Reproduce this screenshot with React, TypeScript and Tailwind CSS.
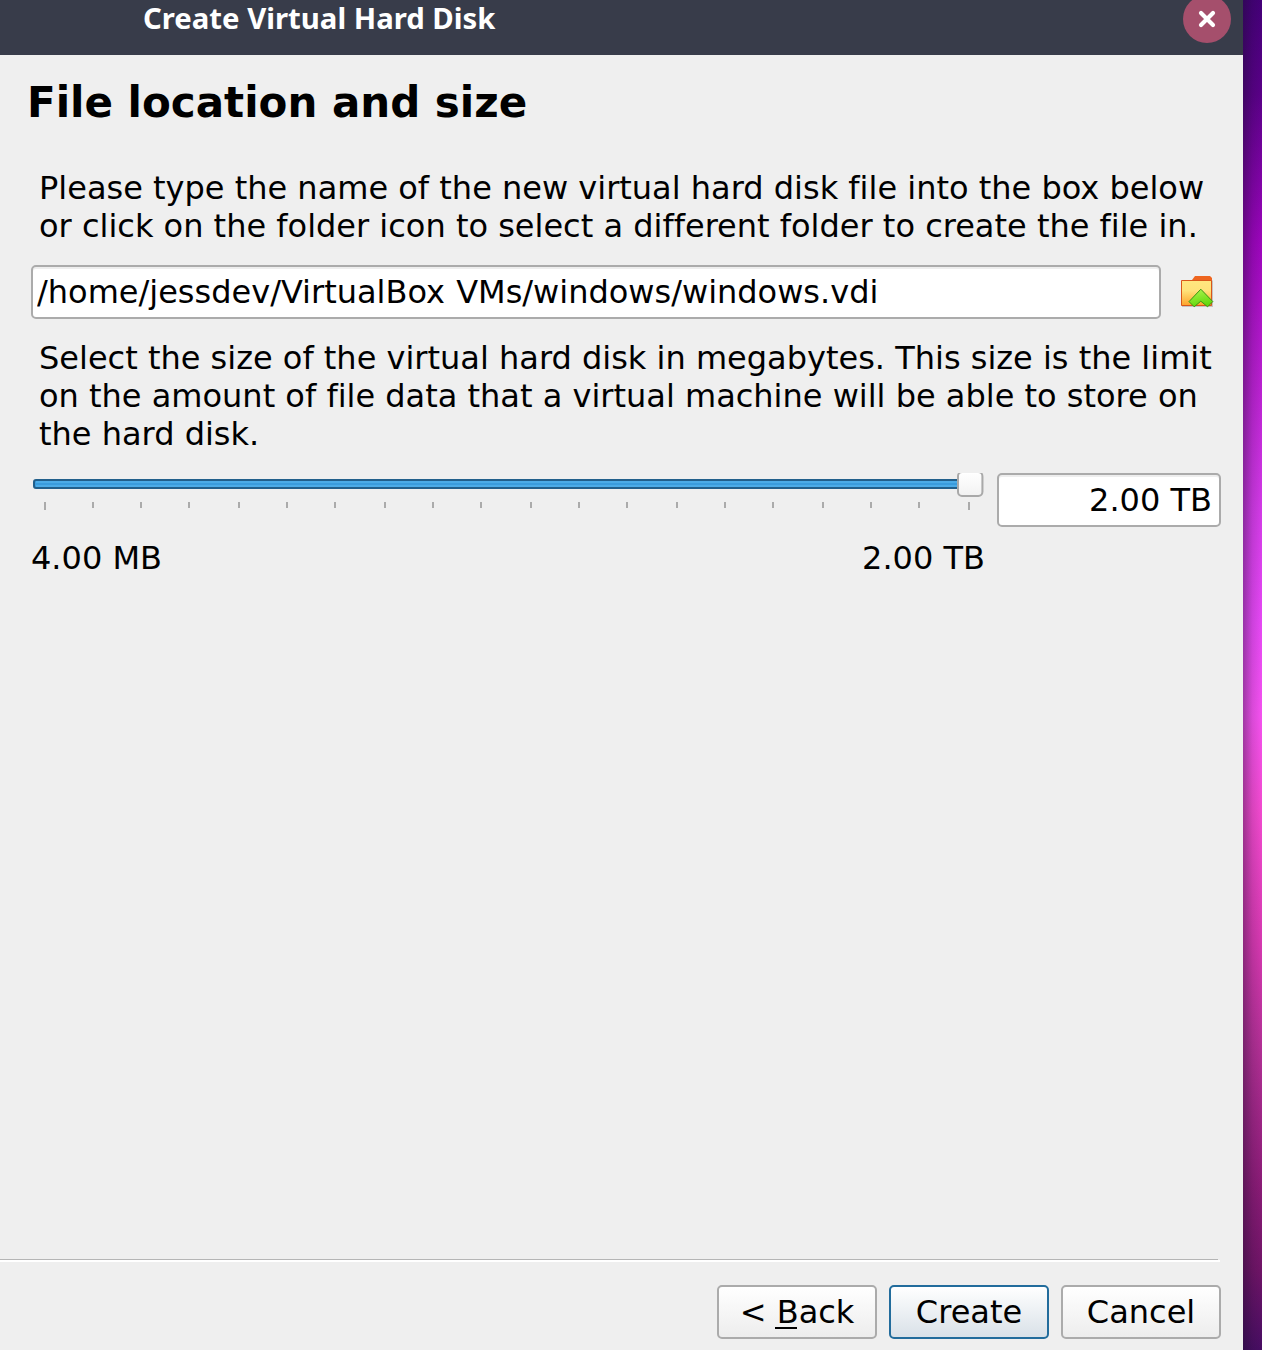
const ticks = [44, 92, 140, 188, 238, 286, 334, 384, 432, 480, 530, 578, 626, 676, 724, 772, 822, 870, 918, 968];

function FolderIcon() {
  return (
    <svg width="36" height="34" viewBox="0 0 36 34" className="block">
      <defs>
        <linearGradient id="folder" x1="0" y1="0" x2="0" y2="1">
          <stop offset="0" stopColor="#ffe680" />
          <stop offset="0.4" stopColor="#ffe27a" />
          <stop offset="1" stopColor="#fda32b" />
        </linearGradient>
        <linearGradient id="arrow" x1="0" y1="0" x2="0.3" y2="1">
          <stop offset="0" stopColor="#b0f552" />
          <stop offset="1" stopColor="#62d80c" />
        </linearGradient>
      </defs>
      <path d="M3 6.5H34V33H3Z" fill="#c4c4c4" />
      <path d="M13 6L16 2H31L33 4V8H12Z" fill="#ee651f" />
      <path d="M2.5 6.5H32.5V31.5H2.5Z" fill="url(#folder)" stroke="#d9571a" />
      <path d="M21.8 15.2L33.8 27.6L28.6 32.8L21.8 27.2L15.2 32.8L10 27.6Z" fill="url(#arrow)" stroke="#399514" strokeWidth="1" />
    </svg>
  );
}

const field =
  "h-[54px] rounded-[5px] border-2 border-[#ababab] bg-white shadow-[inset_0_2px_0_#eeeeee] leading-[50px] outline-none";
const button = "h-[54px] w-[160px] rounded-[5px] border-2 text-center leading-[49px]";

export default function App() {
  return (
    <div className="flex h-[1350px] w-[1262px] overflow-hidden bg-[#efefef] font-['DejaVu_Sans',sans-serif] text-[32px] leading-[38px] text-black [font-variant-ligatures:none]">
      <main className="flex w-[1243px] shrink-0 flex-col">
        <header className="flex h-[55px] shrink-0 items-start justify-between bg-[#383c4a] pr-3 pl-[143px]">
          <h2 className="font-['Noto_Sans',sans-serif] text-[29.3px] leading-[37px] font-bold whitespace-nowrap text-white">
            Create Virtual Hard Disk
          </h2>
          <button aria-label="Close" className="-mt-[5px] flex size-12 items-center justify-center rounded-full bg-[#a54f6c]">
            <svg width="18" height="18" viewBox="0 0 18 18">
              <path d="M3 3L15 15M15 3L3 15" stroke="white" strokeWidth="4.2" strokeLinecap="round" />
            </svg>
          </button>
        </header>
        <h1 className="mt-[23px] ml-[27px] h-[50px] text-[42px] leading-[50px] font-bold whitespace-nowrap">File location and size</h1>
        <p className="mt-[41px] ml-[39px] whitespace-nowrap">
          Please type the name of the new virtual hard disk file into the box below
          <br />
          or click on the folder icon to select a different folder to create the file in.
        </p>
        <div className="mt-5 ml-[31px] flex">
          <input
            aria-label="File path"
            defaultValue="/home/jessdev/VirtualBox VMs/windows/windows.vdi"
            className={`${field} w-[1130px] pl-1 [word-spacing:1px]`}
          />
          <button aria-label="Choose folder" className="mt-[9px] ml-[18px] self-start">
            <FolderIcon />
          </button>
        </div>
        <p className="mt-5 ml-[39px] whitespace-nowrap">
          Select the size of the virtual hard disk in megabytes. This size is the limit
          <br />
          on the amount of file data that a virtual machine will be able to store on
          <br />
          the hard disk.
        </p>
        <div className="mt-5 flex h-[54px] shrink-0">
          <svg width="997" height="54" viewBox="0 0 997 54" className="block shrink-0">
            <defs>
              <linearGradient id="handle" x1="0" y1="0" x2="0" y2="1">
                <stop offset="0" stopColor="#ffffff" />
                <stop offset="1" stopColor="#f2f2f2" />
              </linearGradient>
            </defs>
            <rect x="34" y="7" width="940" height="8" rx="2" fill="#3a9cdd" stroke="#225f8b" strokeWidth="2" />
            <path d="M36 9H960M36 13H960" stroke="#4cabe7" strokeWidth="2" />
            <rect x="958" y="-1" width="24.4" height="24" rx="4" fill="url(#handle)" stroke="#a9a9a9" strokeWidth="2" />
            <path d="M962 0H978" stroke="white" strokeWidth="2" />
            <path d="M983.5 4V19" stroke="#cfcfcf" />
            {ticks.map((x, i) => (
              <rect key={x} x={x} y="29" width="2" height={i === 0 || i === 19 ? 8 : 6} fill="#ababab" />
            ))}
          </svg>
          <input aria-label="Disk size" defaultValue="2.00 TB" className={`${field} w-[224px] pr-[7px] text-right`} />
        </div>
        <div className="mt-3 ml-[31px] flex w-[954px] justify-between whitespace-nowrap">
          <span>4.00 MB</span>
          <span>2.00 TB</span>
        </div>
        <footer className="mt-auto">
          <div className="h-px w-[1218px] bg-[#b5b5b5]" />
          <div className="h-0.5 w-[1220px] bg-white" />
          <div className="mt-[23px] mr-[22px] mb-[11px] flex justify-end gap-3">
            <button className={`${button} border-[#ababab] bg-linear-to-b from-white to-[#ededed]`}>
              &lt; <span className="mr-0.5 -ml-0.5 inline-block h-9 w-[22px] border-b-2 border-black pl-0.5 leading-[38px]">B</span>ack
            </button>
            <button className={`${button} border-[#226c9c] bg-linear-to-b from-white to-[#d9e1e8]`}>Create</button>
            <button className={`${button} border-[#ababab] bg-linear-to-b from-white to-[#ededed]`}>Cancel</button>
          </div>
        </footer>
      </main>
      <aside className="w-[19px] shrink-0 bg-[linear-gradient(to_right,rgba(20,15,40,.38),rgba(20,15,40,.12)_50%,transparent),linear-gradient(to_bottom,#440078_0%,#5a0088_7%,#9d05bd_18%,#b91fd0_28%,#d43be8_38%,#e648f5_46%,#f552f0_53%,#f34ad0_60%,#d638b0_70%,#b12f94_78%,#8a1b76_88%,#701467_94%,#480d63_100%)]" />
    </div>
  );
}
